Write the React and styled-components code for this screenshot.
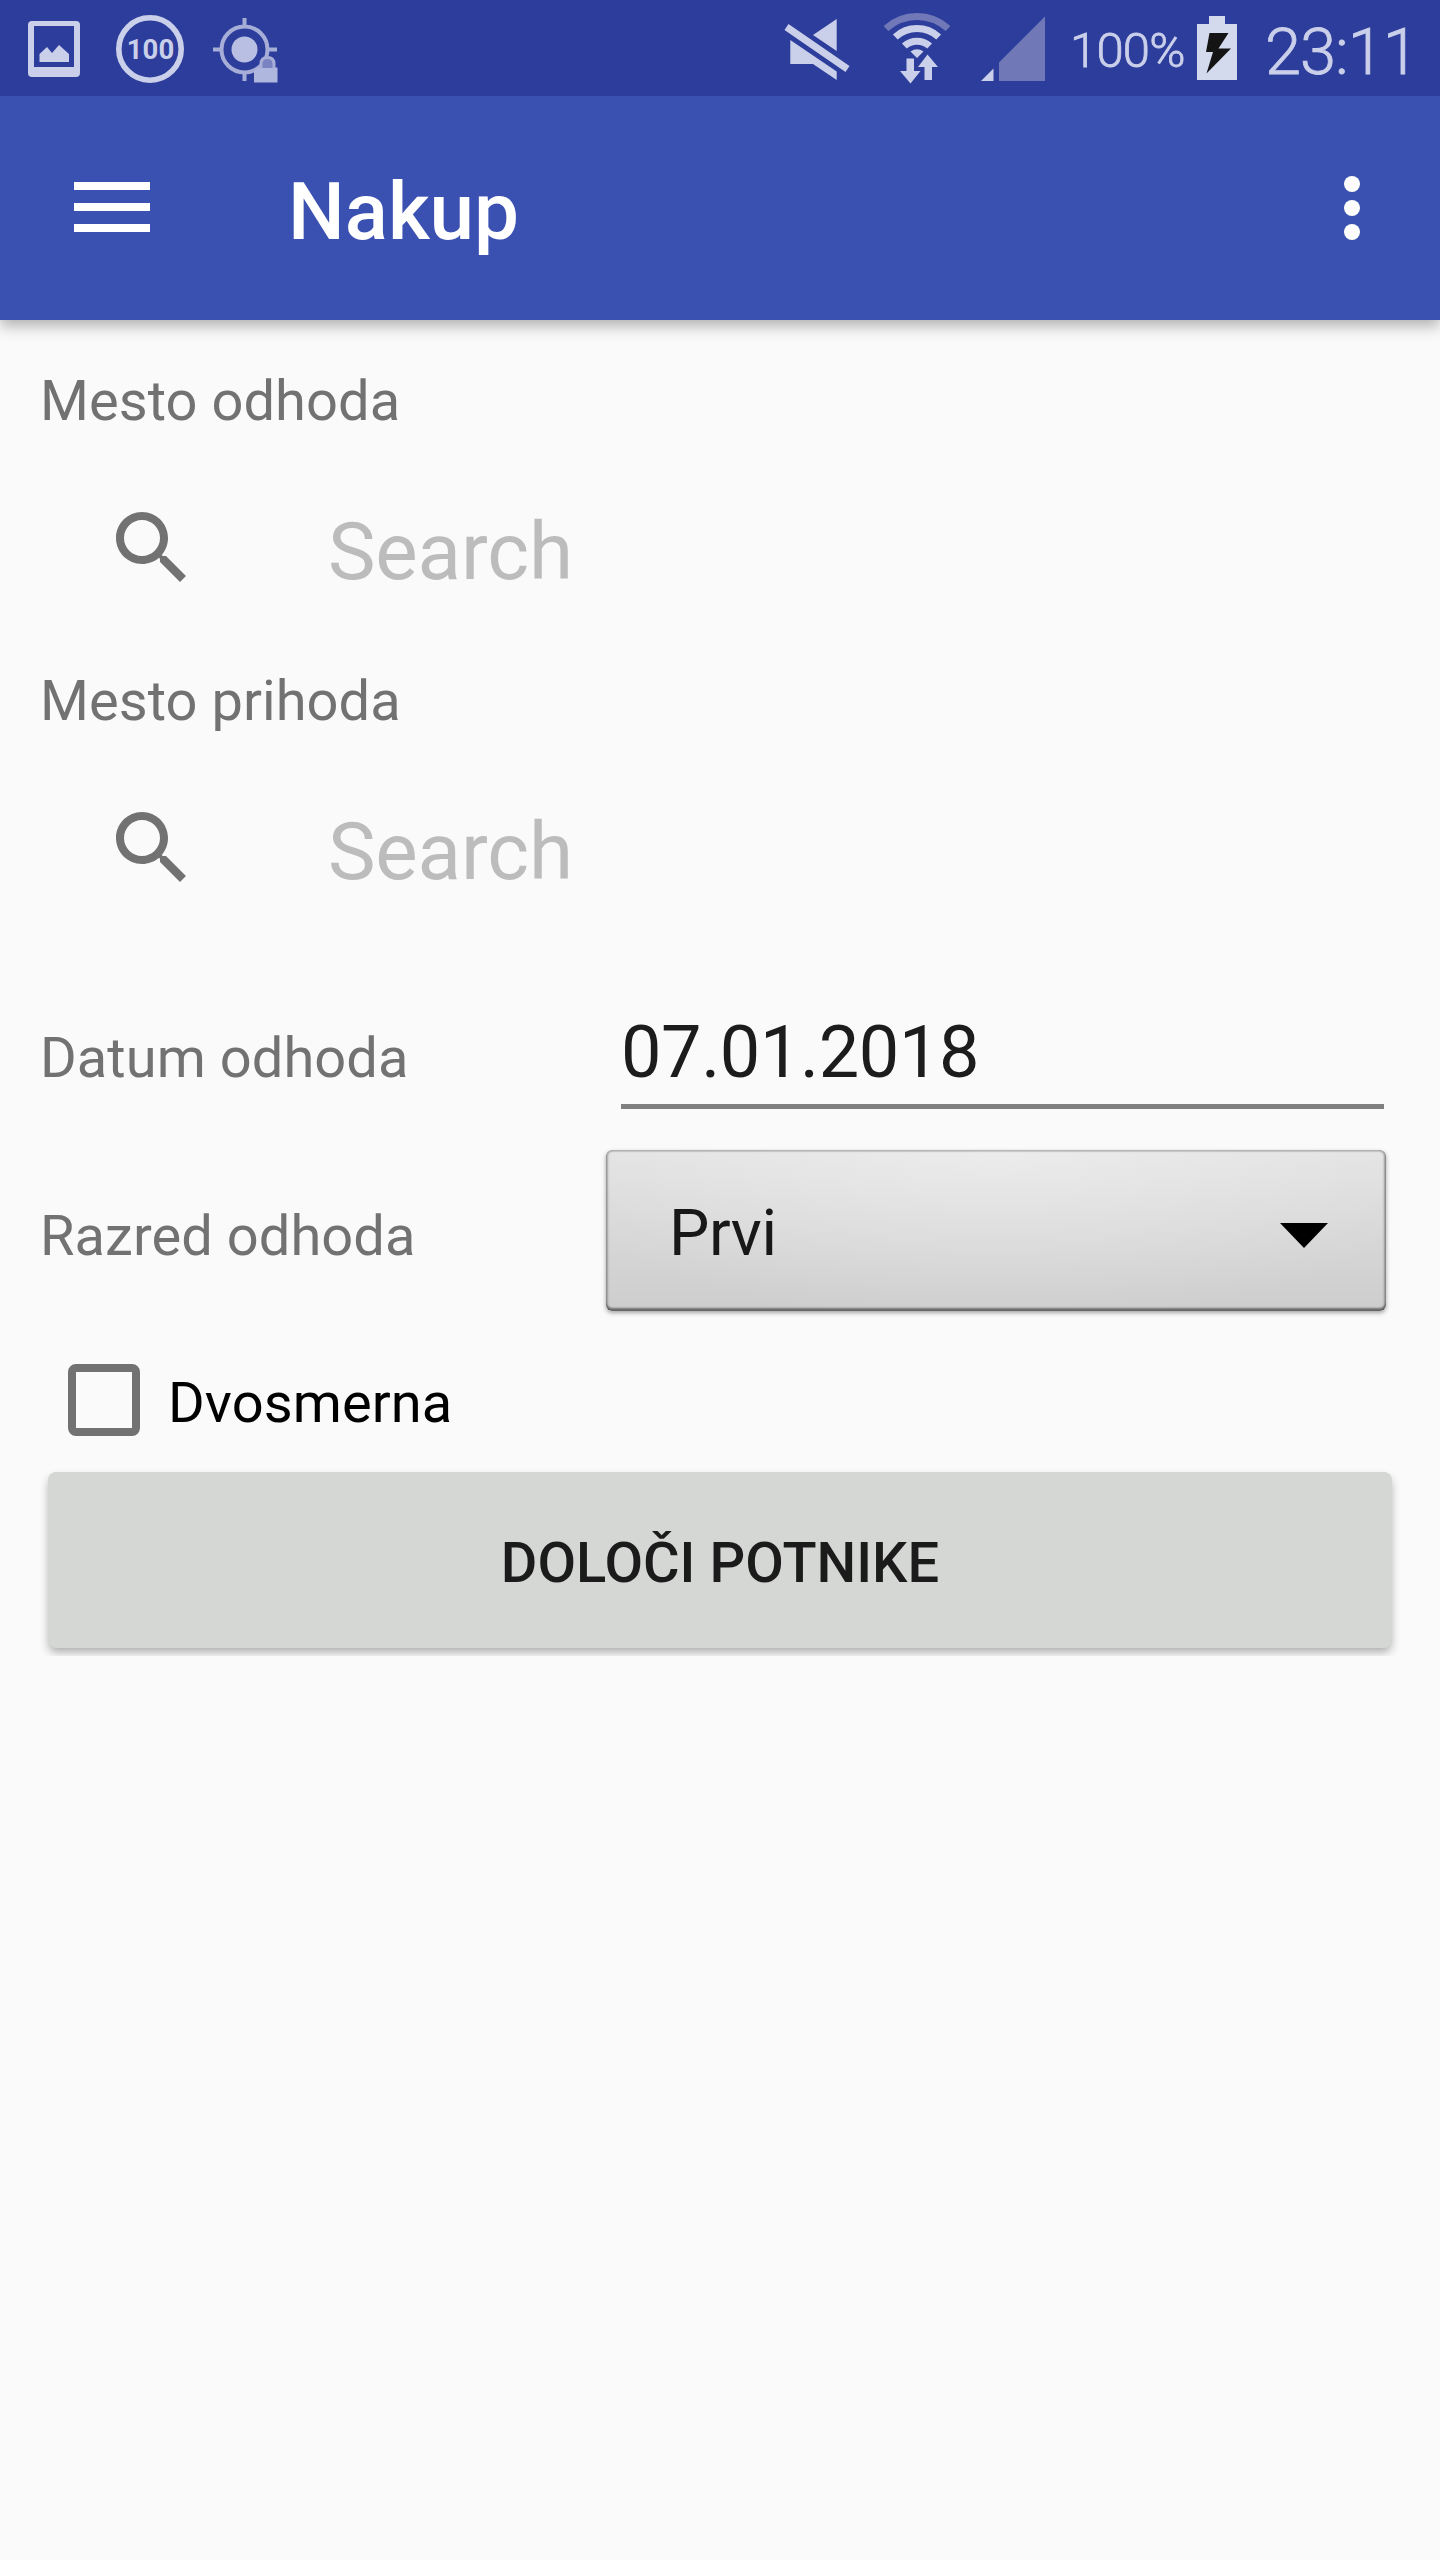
import React from 'react';
import styled, { createGlobalStyle } from 'styled-components';

const Global = createGlobalStyle`
  * { box-sizing: border-box; }
  body { margin: 0; background: #fafafa; }
`;

const Screen = styled.div`
  width: 1440px;
  height: 2560px;
  display: flex;
  flex-direction: column;
  overflow: hidden;
  background: #fafafa;
  font-family: Roboto, 'Liberation Sans', sans-serif;
`;

const StatusBar = styled.header`
  height: 96px;
  flex: none;
  display: flex;
  align-items: flex-start;
  background: #2d3d9b;
  color: #cacfea;
  z-index: 2;
`;

const StatusIcon = styled.svg`
  display: block;
  flex: none;
  height: 96px;
  width: ${(p) => p.$w}px;
`;

const StatusSpacer = styled.div`
  flex: 1;
`;

const StatusText = styled.span`
  flex: none;
  white-space: nowrap;
  width: ${(p) => p.$w}px;
  font-size: ${(p) => p.$size}px;
  font-weight: 300;
  line-height: ${(p) => p.$line}px;
  letter-spacing: ${(p) => p.$track}px;
  -webkit-text-stroke: 0.8px #cacfea;
`;

const Toolbar = styled.nav`
  height: 224px;
  flex: none;
  display: flex;
  align-items: flex-start;
  background: #3b51b1;
  color: #fff;
  box-shadow: 0 6px 14px rgba(0, 0, 0, 0.3);
  z-index: 1;
`;

const MenuButton = styled.button`
  width: 76px;
  height: 50px;
  margin: 86px 0 0 74px;
  padding: 0;
  border: 0;
  background: none;
  display: flex;
  flex-direction: column;
  gap: 13px;
`;

const MenuLine = styled.span`
  width: 76px;
  height: 8px;
  background: #fff;
`;

const Title = styled.h1`
  flex: 1;
  margin: 69px 0 0 138px;
  font-size: 80px;
  font-weight: 500;
  line-height: 94px;
`;

const Overflow = styled.button`
  width: 16px;
  margin: 80px 80px 0 0;
  padding: 0;
  border: 0;
  background: none;
  display: flex;
  flex-direction: column;
  gap: 8px;
`;

const Dot = styled.span`
  width: 16px;
  height: 16px;
  border-radius: 50%;
  background: #fff;
`;

const Form = styled.main`
  display: flex;
  flex-direction: column;
  padding: 48px 40px 0;
`;

const Label = styled.label`
  display: block;
  height: 66px;
  font-size: 56px;
  line-height: 66px;
  letter-spacing: 0.06px;
  color: #727272;
  white-space: nowrap;
`;

const SearchField = styled.div`
  height: 234px;
  display: flex;
  align-items: flex-start;
  padding: 66px 0 0 64px;
`;

const SearchGlyph = styled.svg`
  width: 96px;
  height: 96px;
  fill: #727272;
`;

const Placeholder = styled.span`
  margin: 5px 0 0 128px;
  font-size: 80px;
  line-height: 94px;
  letter-spacing: -0.15px;
  color: #bcbcbc;
`;

const FieldRow = styled.div`
  display: flex;
  align-items: flex-start;
  height: ${(p) => p.$h}px;
`;

const FieldName = styled.div`
  width: ${(p) => p.$w}px;
  flex: none;
  padding-top: ${(p) => p.$top}px;
`;

const DateInput = styled.div`
  width: 763px;
  height: 99px;
  margin-top: 42px;
  border-bottom: 5px solid #808080;
  font-size: 72px;
  line-height: 86px;
  letter-spacing: -0.35px;
  color: #1c1c1c;
`;

const Select = styled.div`
  width: 780px;
  height: 161px;
  display: flex;
  align-items: center;
  justify-content: space-between;
  padding: 7px 58px 0 63px;
  border-radius: 6px;
  background:
    radial-gradient(ellipse 60% 110% at 50% 0, rgba(255, 255, 255, 0.32), rgba(255, 255, 255, 0)),
    linear-gradient(#e3e3e3, #cdcdcd);
  box-shadow:
    inset 0 2px 1px rgba(150, 150, 150, 0.35),
    inset 0 -3px 2px rgba(70, 70, 70, 0.7),
    inset -2px 0 2px rgba(90, 90, 90, 0.5),
    inset 2px 0 2px rgba(90, 90, 90, 0.4),
    0 2px 4px rgba(0, 0, 0, 0.35);
  font-size: 64px;
  line-height: 76px;
  letter-spacing: -0.4px;
  color: #181818;
`;

const Caret = styled.svg`
  width: 48px;
  height: 25px;
  margin-top: 3px;
`;

const CheckRow = styled.label`
  display: flex;
  align-items: flex-start;
  height: 113px;
  padding-left: 28px;
`;

const CheckBox = styled.span`
  width: 72px;
  height: 72px;
  margin-top: 13px;
  border: 8px solid #727272;
  border-radius: 8px;
`;

const CheckLabel = styled.span`
  margin: 19px 0 0 28px;
  font-size: 56px;
  line-height: 66px;
  letter-spacing: 0.1px;
  color: #000;
`;

const SubmitClip = styled.div`
  height: 192px;
  padding: 8px;
  overflow: hidden;
`;

const Submit = styled.button`
  display: block;
  width: 100%;
  height: 176px;
  padding: 6px 0 0;
  border: 0;
  border-radius: 8px;
  background: #d5d7d4;
  box-shadow: 0 5px 10px -1px rgba(0, 0, 0, 0.32);
  font-family: inherit;
  font-size: 56px;
  font-weight: 500;
  color: #1b1b1b;
`;

function LeftStatusIcons() {
  return (
    <StatusIcon $w={320} viewBox="0 0 320 96">
      <path
        fill="#cacfea"
        fillRule="evenodd"
        d="M32 21H76Q80 21 80 25V73Q80 77 76 77H32Q28 77 28 73V25Q28 21 32 21ZM34 26V67H74V26Z"
      />
      <path fill="#cacfea" d="M39.5 62V54L47 47L52 53L59 45L69 54V62Z" />
      <circle cx="150" cy="49" r="31.2" fill="none" stroke="#cacfea" strokeWidth="5.6" />
      <text
        x="150.5"
        y="59"
        textAnchor="middle"
        fontFamily="Roboto, sans-serif"
        fontSize="27.5"
        fontWeight="700"
        fill="#cacfea"
      >
        100
      </text>
      <g fill="none" stroke="#a6aed8" strokeWidth="4">
        <circle cx="244.5" cy="49.5" r="23" />
        <path d="M244.5 18V27M244.5 72V81M213 49.5H221M268 49.5H277" />
      </g>
      <circle cx="244.5" cy="49.5" r="13" fill="#b8bfe2" />
      <path d="M254 71L258 67.500H277.500V82.500H254Z" fill="#b0b7de" />
      <path
        d="M261 68V64Q261 57.500 267.500 57.500Q274 57.500 274 64V68"
        fill="#7983c2"
        stroke="#a6aed8"
        strokeWidth="3"
      />
    </StatusIcon>
  );
}

function MuteIcon() {
  return (
    <StatusIcon $w={100} viewBox="0 0 100 96" fill="#cacfea">
      <path d="M28.500 24L89.500 66L85.500 72L24.500 30Z" />
      <path d="M76.700 19V51L53 35Z" />
      <path d="M30.300 40L76.700 71.500V80L53 64H30.300Z" />
    </StatusIcon>
  );
}

function WifiIcon() {
  return (
    <StatusIcon $w={100} viewBox="860 0 100 96">
      <path d="M886 28.500A46 46 0 0 1 948 28.500" fill="none" stroke="#7078b8" strokeWidth="7" />
      <path d="M895.300 37A32 32 0 0 1 938.700 37" fill="none" stroke="#cacfea" strokeWidth="7" />
      <path d="M904.300 46A19 19 0 0 1 929.700 46" fill="none" stroke="#cacfea" strokeWidth="7" />
      <path d="M910.500 51.500Q917 47 923.500 51.500L917 58Z" fill="#cacfea" />
      <path d="M906.500 58.500H914V71H920.500L910.500 83.500L900 71H906.500Z" fill="#cacfea" />
      <path d="M927.500 54.500L938 67H932V80H924.500V67H918Z" fill="#cacfea" />
    </StatusIcon>
  );
}

function SignalIcon() {
  return (
    <StatusIcon $w={110} viewBox="960 0 110 96">
      <path d="M981 81L993.500 68.500V81Z" fill="#cacfea" />
      <path d="M999 81V62.500L1045 16.500V81Z" fill="#7078b8" />
    </StatusIcon>
  );
}

function BatteryIcon() {
  return (
    <StatusIcon $w={70} viewBox="1195 0 70 96">
      <path d="M1209 16H1225V24H1237V80H1197V24H1209Z" fill="#d3daed" />
      <path d="M1209.500 33H1228.500L1218.500 48.500H1231L1206.500 73.500L1213 52H1206Z" fill="#141414" />
    </StatusIcon>
  );
}

function Search() {
  return (
    <SearchField>
      <SearchGlyph viewBox="0 0 24 24">
        <path d="M15.500 14h-.79l-.28-.27C15.410 12.590 16 11.110 16 9.500 16 5.910 13.090 3 9.500 3S3 5.910 3 9.500 5.910 16 9.500 16c1.610 0 3.090-.59 4.230-1.570l.27.28v.79l5 4.990L20.490 19l-4.990-5zm-6 0C7.010 14 5 11.990 5 9.500S7.010 5 9.500 5 14 7.010 14 9.500 11.990 14 9.500 14z" />
      </SearchGlyph>
      <Placeholder>Search</Placeholder>
    </SearchField>
  );
}

export default function App() {
  return (
    <Screen>
      <Global />
      <StatusBar>
        <LeftStatusIcons />
        <StatusSpacer />
        <MuteIcon />
        <WifiIcon />
        <SignalIcon />
        <StatusText $w={125} $size={49} $line={101} $track={-0.8}>100%</StatusText>
        <BatteryIcon />
        <StatusText $w={175} $size={65} $line={105} $track={-1}>23:11</StatusText>
      </StatusBar>

      <Toolbar>
        <MenuButton aria-label="Menu">
          <MenuLine />
          <MenuLine />
          <MenuLine />
        </MenuButton>
        <Title>Nakup</Title>
        <Overflow aria-label="More">
          <Dot />
          <Dot />
          <Dot />
        </Overflow>
      </Toolbar>

      <Form>
        <Label>Mesto odhoda</Label>
        <Search />
        <Label>Mesto prihoda</Label>
        <Search />
        <FieldRow $h={182}>
          <FieldName $w={581} $top={57}>
            <Label>Datum odhoda</Label>
          </FieldName>
          <DateInput>07.01.2018</DateInput>
        </FieldRow>
        <FieldRow $h={201}>
          <FieldName $w={566} $top={53}>
            <Label>Razred odhoda</Label>
          </FieldName>
          <Select>
            Prvi
            <Caret viewBox="0 0 48 25">
              <path d="M0 0H48L24 25Z" />
            </Caret>
          </Select>
        </FieldRow>
        <CheckRow>
          <CheckBox />
          <CheckLabel>Dvosmerna</CheckLabel>
        </CheckRow>
        <SubmitClip>
          <Submit>DOLOČI POTNIKE</Submit>
        </SubmitClip>
      </Form>
    </Screen>
  );
}
